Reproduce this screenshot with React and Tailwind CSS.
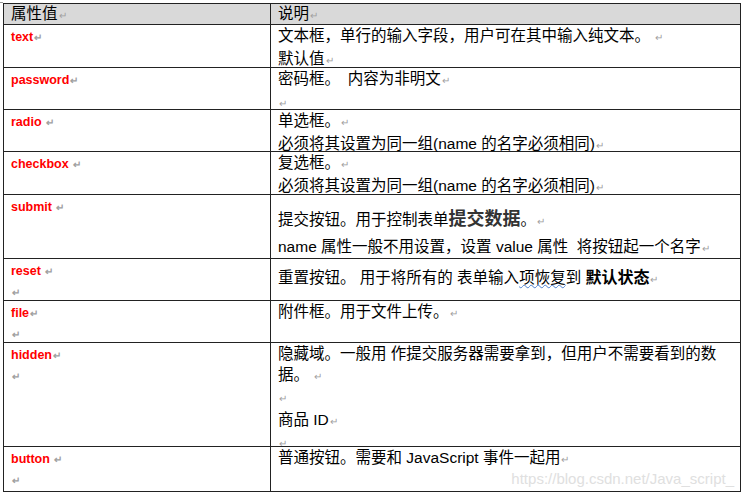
const P = () => <span className="text-[#a0a0a0] text-[10px] ml-[1px]">↵</span>;

const rows = [
  { k: 'text', h: 43, d: [<>文本框，单行的输入字段，用户可在其中输入纯文本。 <P /></>, <>默认值<P /></>] },
  { k: 'password', h: 42, d: [<>密码框。　内容为非明文<P /></>, <P />], ka: true },
  { k: 'radio', h: 42, d: [<>单选框。<P /></>, <>必须将其设置为同一组(name 的名字必须相同)<P /></>], sp: true },
  { k: 'checkbox', h: 43, d: [<>复选框。<P /></>, <>必须将其设置为同一组(name 的名字必须相同)<P /></>], sp: true },
  {
    k: 'submit', h: 64, sp: true,
    d: [
      <div className="pt-[8px] leading-[26px]">提交按钮。用于控制表单<span className="font-bold text-[18px] text-[#333]" style={{ fontFamily: '"Noto Sans CJK SC", serif' }}>提交数据</span>。<P /></div>,
      <div className="leading-[24px]">name 属性一般不用设置，设置 value 属性&nbsp; 将按钮起一个名字<P /></div>,
    ],
  },
  {
    k: 'reset', h: 42, sp: true, kb: true,
    d: [<div className="pt-[8px]">重置按钮。 用于将所有的 表单输入<span className="underline decoration-wavy decoration-[#4a7fd0] decoration-1">项恢复</span>到 <span className="font-bold text-[16px]">默认状态</span><P /></div>],
  },
  { k: 'file', h: 42, d: [<>附件框。用于文件上传。<P /></>], kb: true },
  { k: 'hidden', h: 104, kb: true, d: [<>隐藏域。一般用 作提交服务器需要拿到，但用户不需要看到的数</>, <>据。 <P /></>, <P />, <>商品 ID<P /></>, <P />] },
  { k: 'button', h: 44, sp: true, kb: true, d: [<>普通按钮。需要和 JavaScript 事件一起用<P /></>] },
];

export default function App() {
  return (
    <div className="w-[742px] h-[496px] bg-white relative text-[15.5px] text-black" style={{ fontFamily: '"Liberation Sans", "Noto Sans CJK SC", sans-serif' }}>
      <div className="absolute left-0 top-[2px] w-[3px] h-[1px] bg-[#999]" />
      <div className="pt-[3px] pl-[3px]">
        <div className="w-[738px] border border-[#222]">
          <div className="flex h-[21px] bg-[#d9d9d9] border-b border-[#222] leading-[20px]">
            <div className="w-[267px] border-r border-[#222] px-[7px]">属性值<P /></div>
            <div className="flex-1 px-[7px]">说明<P /></div>
          </div>
          {rows.map((r, i) => (
            <div key={r.k} className={`flex ${i < rows.length - 1 ? 'border-b border-[#222]' : ''}`} style={{ height: r.h }}>
              <div className="w-[267px] border-r border-[#222] px-[7px] pt-[2px] text-[12.5px] font-bold text-[#ff0000] leading-[20px]">
                <div>{r.k}{r.sp ? ' ' : ''}<P /></div>
                {r.kb && <div><P /></div>}
              </div>
              <div className="flex-1 px-[7px] pt-[1px] leading-[20.5px] relative whitespace-nowrap">
                {r.d.map((l, j) => <div key={j}>{l}</div>)}
                {r.k === 'button' && (
                  <div className="absolute right-[6px] bottom-[2px] text-[15px] text-[#e0e0e0]" style={{ fontFamily: '"Liberation Sans", sans-serif' }}>
                    https://blog.csdn.net/Java_script_
                  </div>
                )}
              </div>
            </div>
          ))}
        </div>
      </div>
    </div>
  );
}
